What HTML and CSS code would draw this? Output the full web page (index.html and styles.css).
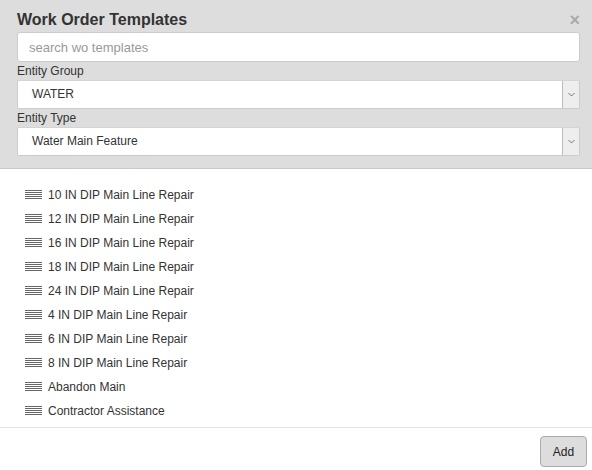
FILE: index.html
```html
<!DOCTYPE html>
<html lang="en">
<head>
    <meta charset="UTF-8">
    <title>Work Order Templates</title>
    <link rel="stylesheet" href="styles.css">
</head>
<body>
    <div class="modal">
        <div class="modal-header">
            <div class="title-row">
                <h1>Work Order Templates</h1>
                <span class="close">&times;</span>
            </div>
            <input type="text" class="search" placeholder="search wo templates">
            <label>Entity Group</label>
            <div class="select">
                <span class="value">WATER</span>
                <span class="caret"><svg width="7" height="5" viewBox="0 0 7 5"><path d="M0.5 1 L3.5 4 L6.5 1" fill="none" stroke="#777" stroke-width="1"/></svg></span>
            </div>
            <label>Entity Type</label>
            <div class="select">
                <span class="value">Water Main Feature</span>
                <span class="caret"><svg width="7" height="5" viewBox="0 0 7 5"><path d="M0.5 1 L3.5 4 L6.5 1" fill="none" stroke="#777" stroke-width="1"/></svg></span>
            </div>
        </div>

        <ul class="templates">
            <li><svg class="handle" width="17" height="10" viewBox="0 0 17 10"><path d="M0 0.5H17M0 2.5H17M0 4.5H17M0 6.5H17M0 8.5H17" stroke="#666" stroke-width="1"/></svg>10 IN DIP Main Line Repair</li>
            <li><svg class="handle" width="17" height="10" viewBox="0 0 17 10"><path d="M0 0.5H17M0 2.5H17M0 4.5H17M0 6.5H17M0 8.5H17" stroke="#666" stroke-width="1"/></svg>12 IN DIP Main Line Repair</li>
            <li><svg class="handle" width="17" height="10" viewBox="0 0 17 10"><path d="M0 0.5H17M0 2.5H17M0 4.5H17M0 6.5H17M0 8.5H17" stroke="#666" stroke-width="1"/></svg>16 IN DIP Main Line Repair</li>
            <li><svg class="handle" width="17" height="10" viewBox="0 0 17 10"><path d="M0 0.5H17M0 2.5H17M0 4.5H17M0 6.5H17M0 8.5H17" stroke="#666" stroke-width="1"/></svg>18 IN DIP Main Line Repair</li>
            <li><svg class="handle" width="17" height="10" viewBox="0 0 17 10"><path d="M0 0.5H17M0 2.5H17M0 4.5H17M0 6.5H17M0 8.5H17" stroke="#666" stroke-width="1"/></svg>24 IN DIP Main Line Repair</li>
            <li><svg class="handle" width="17" height="10" viewBox="0 0 17 10"><path d="M0 0.5H17M0 2.5H17M0 4.5H17M0 6.5H17M0 8.5H17" stroke="#666" stroke-width="1"/></svg>4 IN DIP Main Line Repair</li>
            <li><svg class="handle" width="17" height="10" viewBox="0 0 17 10"><path d="M0 0.5H17M0 2.5H17M0 4.5H17M0 6.5H17M0 8.5H17" stroke="#666" stroke-width="1"/></svg>6 IN DIP Main Line Repair</li>
            <li><svg class="handle" width="17" height="10" viewBox="0 0 17 10"><path d="M0 0.5H17M0 2.5H17M0 4.5H17M0 6.5H17M0 8.5H17" stroke="#666" stroke-width="1"/></svg>8 IN DIP Main Line Repair</li>
            <li><svg class="handle" width="17" height="10" viewBox="0 0 17 10"><path d="M0 0.5H17M0 2.5H17M0 4.5H17M0 6.5H17M0 8.5H17" stroke="#666" stroke-width="1"/></svg>Abandon Main</li>
            <li><svg class="handle" width="17" height="10" viewBox="0 0 17 10"><path d="M0 0.5H17M0 2.5H17M0 4.5H17M0 6.5H17M0 8.5H17" stroke="#666" stroke-width="1"/></svg>Contractor Assistance</li>
        </ul>

        <div class="modal-footer">
            <button type="button">Add</button>
        </div>
    </div>
</body>
</html>
```

FILE: styles.css
```css
body {
    margin: 0;
    font-family: 'Liberation Sans', Arial, sans-serif;
    color: #333;
    background: #fff;
}

.modal {
    width: 592px;
    height: 470px;
    display: flex;
    flex-direction: column;
}

.modal-header {
    background: #dddddd;
    border-bottom: 1px solid #c8c8c8;
    padding: 10px 12px 12px 17px;
    display: flex;
    flex-direction: column;
}

.title-row {
    display: flex;
    justify-content: space-between;
    align-items: flex-start;
}

.title-row h1 {
    margin: 0;
    font-size: 16px;
    line-height: 20px;
    font-weight: bold;
    color: #333;
}

.close {
    font-size: 18px;
    line-height: 18px;
    font-weight: bold;
    color: #aaa;
    margin-top: 1px;
}

.search {
    margin-top: 2px;
    height: 30px;
    box-sizing: border-box;
    border: 1px solid #ccc;
    border-radius: 3px;
    padding: 0 11px;
    font-family: inherit;
    font-size: 13px;
    color: #333;
    background: #fff;
    outline: none;
}

.search::placeholder {
    color: #999;
}

.modal-header label {
    font-size: 12px;
    line-height: 18px;
    color: #333;
}

.select {
    height: 29px;
    box-sizing: border-box;
    display: flex;
    background: #fff;
    border: 1px solid #ccc;
    border-top-color: #d4d4d4;
    border-radius: 2px;
    font-size: 12px;
}

.select .value {
    flex: 1;
    padding-left: 14px;
    line-height: 27px;
}

.caret {
    width: 16px;
    border-left: 1px solid #bbb;
    background: #eee;
    display: flex;
    align-items: center;
    justify-content: center;
}

.templates {
    list-style: none;
    margin: 0;
    padding: 14px 0 3px 25px;
    flex: 1;
    border-bottom: 1px solid #e2e2e2;
}

.templates li {
    height: 24px;
    display: flex;
    align-items: center;
    font-size: 12px;
    color: #333;
}

.handle {
    margin-right: 6px;
    flex-shrink: 0;
}

.modal-footer {
    display: flex;
    justify-content: flex-end;
    padding: 8px 5px 3px 0;
}

.modal-footer button {
    width: 47px;
    height: 31px;
    font-family: inherit;
    font-size: 12px;
    color: #222;
    background: #dddddd;
    border: 1px solid #aaa;
    border-radius: 4px;
    padding: 0;
}
```
